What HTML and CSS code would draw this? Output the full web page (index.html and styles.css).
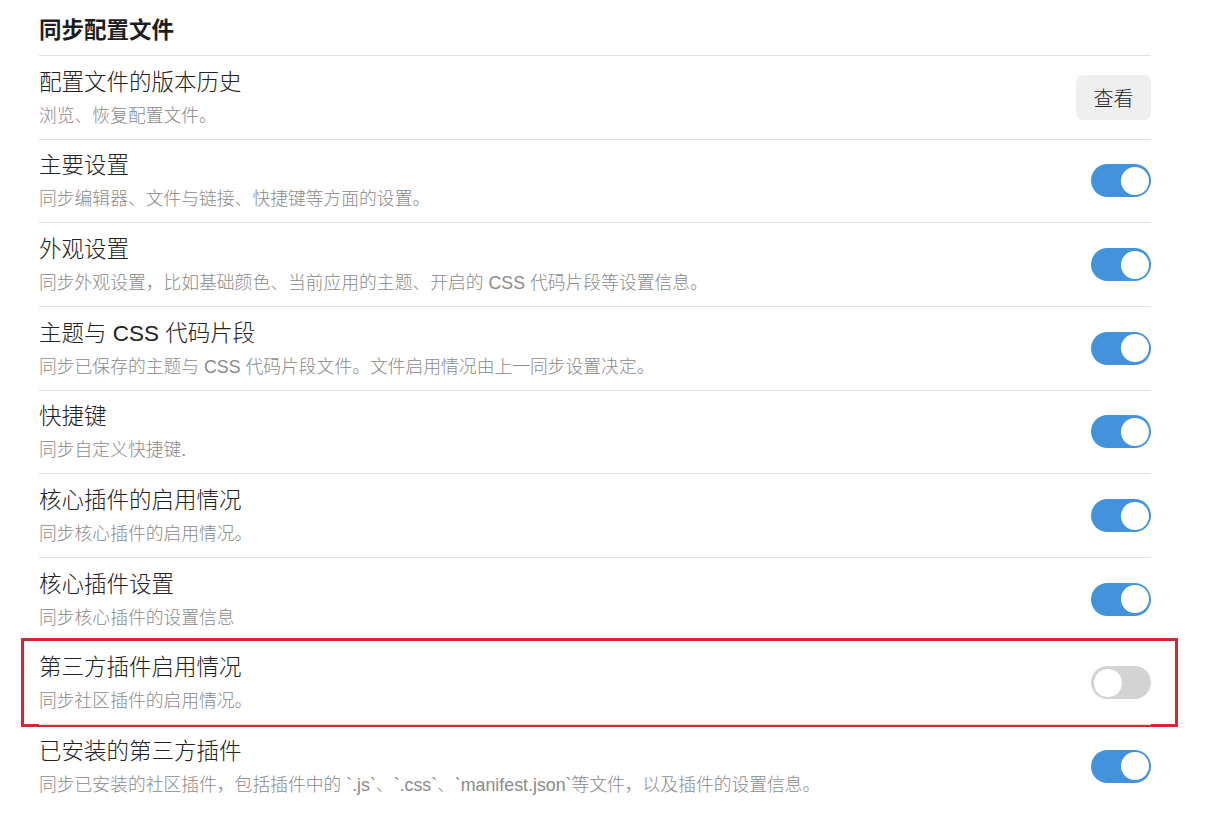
FILE: index.html
```html
<!DOCTYPE html>
<html lang="zh-CN">
<head>
<meta charset="utf-8">
<title>同步配置文件</title>
<link rel="stylesheet" href="styles.css">
</head>
<body>
<div class="page">
  <div class="heading">同步配置文件</div>

  <div class="row">
    <div class="info">
      <div class="name">配置文件的版本历史</div>
      <div class="desc">浏览、恢复配置文件。</div>
    </div>
    <button class="btn">查看</button>
  </div>

  <div class="row">
    <div class="info">
      <div class="name">主要设置</div>
      <div class="desc">同步编辑器、文件与链接、快捷键等方面的设置。</div>
    </div>
    <div class="toggle on"></div>
  </div>

  <div class="row">
    <div class="info">
      <div class="name">外观设置</div>
      <div class="desc">同步外观设置，比如基础颜色、当前应用的主题、开启的 CSS 代码片段等设置信息。</div>
    </div>
    <div class="toggle on"></div>
  </div>

  <div class="row">
    <div class="info">
      <div class="name">主题与 CSS 代码片段</div>
      <div class="desc">同步已保存的主题与 CSS 代码片段文件。文件启用情况由上一同步设置决定。</div>
    </div>
    <div class="toggle on"></div>
  </div>

  <div class="row">
    <div class="info">
      <div class="name">快捷键</div>
      <div class="desc">同步自定义快捷键.</div>
    </div>
    <div class="toggle on"></div>
  </div>

  <div class="row">
    <div class="info">
      <div class="name">核心插件的启用情况</div>
      <div class="desc">同步核心插件的启用情况。</div>
    </div>
    <div class="toggle on"></div>
  </div>

  <div class="row">
    <div class="info">
      <div class="name">核心插件设置</div>
      <div class="desc">同步核心插件的设置信息</div>
    </div>
    <div class="toggle on"></div>
  </div>

  <div class="row highlighted">
    <div class="info">
      <div class="name">第三方插件启用情况</div>
      <div class="desc">同步社区插件的启用情况。</div>
    </div>
    <div class="toggle"></div>
  </div>

  <div class="row">
    <div class="info">
      <div class="name">已安装的第三方插件</div>
      <div class="desc">同步已安装的社区插件，包括插件中的 `.js`、`.css`、`manifest.json`等文件，以及插件的设置信息。</div>
    </div>
    <div class="toggle on"></div>
  </div>
</div>
</body>
</html>
```

FILE: styles.css
```css
html, body {
  margin: 0;
  padding: 0;
  background: #ffffff;
}

body {
  font-family: "Liberation Sans", "Noto Sans CJK SC", sans-serif;
  color: #222222;
}

.page {
  width: 1112px;
  margin-left: 39px;
}

.heading {
  height: 55px;
  box-sizing: border-box;
  padding-top: 16px;
  font-size: 22.5px;
  line-height: 30px;
  font-weight: 700;
  color: #1e1e1e;
}

.row {
  position: relative;
  height: 83.65px;
  box-sizing: border-box;
  border-top: 1px solid #e2e2e2;
  display: flex;
  align-items: center;
  justify-content: space-between;
}

.info {
  display: flex;
  flex-direction: column;
  gap: 5px;
  padding-top: 2px;
}

.name {
  font-size: 22.5px;
  line-height: 30px;
  font-weight: 300;
  color: #222222;
}

.desc {
  font-size: 17.8px;
  line-height: 26px;
  font-weight: 300;
  color: #8a8a8a;
}

.btn {
  width: 75px;
  height: 45px;
  border: none;
  border-radius: 7px;
  background: #efefef;
  font-family: "Noto Sans CJK SC", sans-serif;
  font-size: 20px;
  font-weight: 300;
  color: #222222;
  padding: 0;
}

.toggle {
  position: relative;
  width: 60px;
  height: 33px;
  border-radius: 17px;
  background: #d3d3d3;
  flex: none;
}

.toggle::after {
  content: "";
  position: absolute;
  top: 2.5px;
  left: 2.5px;
  width: 28px;
  height: 28px;
  border-radius: 50%;
  background: #ffffff;
}

.toggle.on {
  background: #4292dc;
}

.toggle.on::after {
  left: auto;
  right: 2.5px;
}

.highlighted::after {
  content: "";
  position: absolute;
  top: -3px;
  bottom: -3px;
  left: -18px;
  right: -27px;
  border: 3px solid #d8262e;
  pointer-events: none;
}
```
